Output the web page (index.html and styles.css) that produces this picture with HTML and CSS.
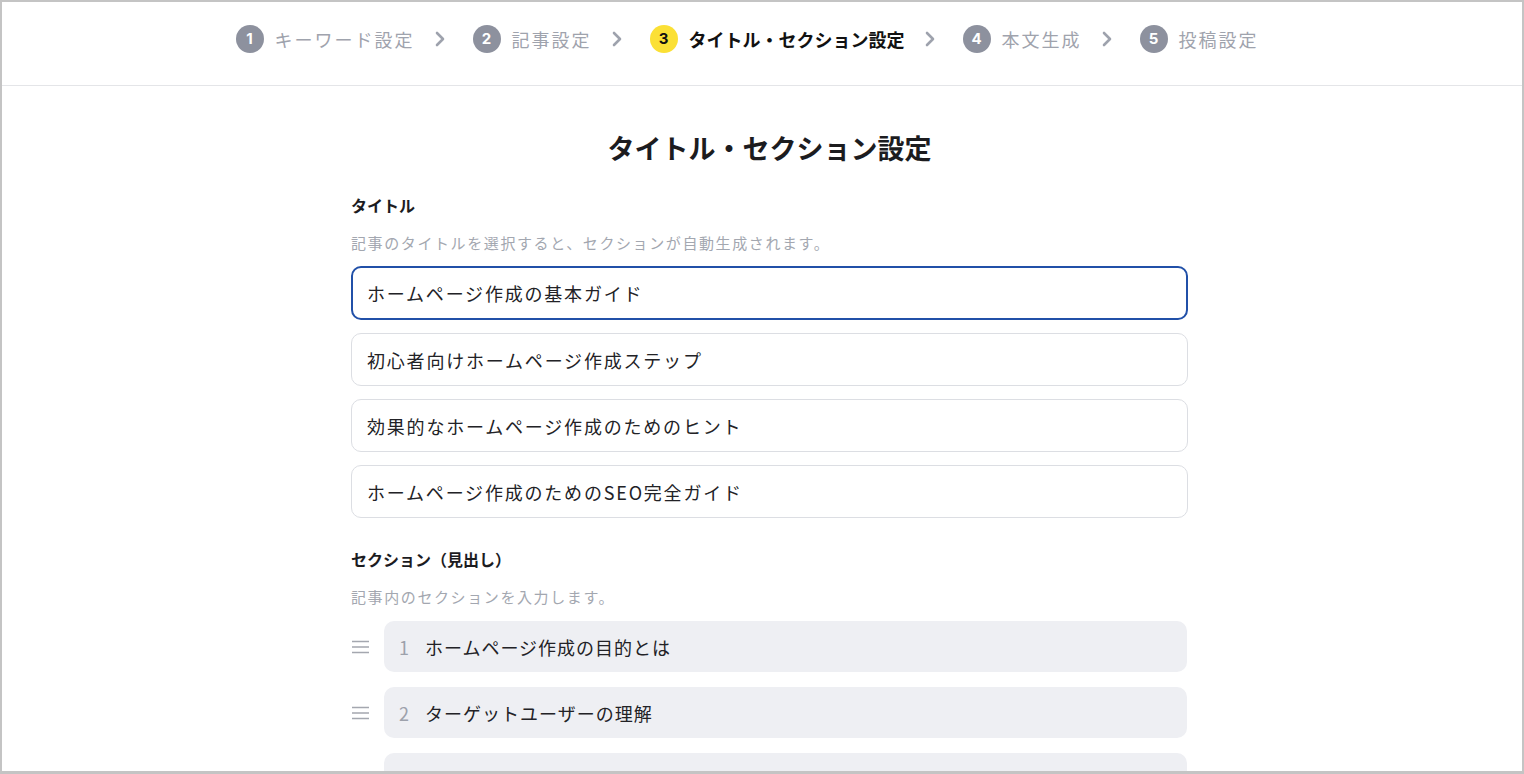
FILE: index.html
```html
<!DOCTYPE html>
<html lang="ja">
<head>
<meta charset="utf-8">
<title>タイトル・セクション設定</title>
<link rel="stylesheet" href="styles.css">
</head>
<body>
<div class="frame">
  <header class="header">
    <nav class="stepper">
      <div class="step">
        <span class="step-num">1</span><span class="step-label">キーワード設定</span>
      </div>
      <svg class="chev" viewBox="0 0 10 16" width="10" height="16"><path d="M2 2 L8 8 L2 14" /></svg>
      <div class="step">
        <span class="step-num">2</span><span class="step-label">記事設定</span>
      </div>
      <svg class="chev" viewBox="0 0 10 16" width="10" height="16"><path d="M2 2 L8 8 L2 14" /></svg>
      <div class="step step-active">
        <span class="step-num">3</span><span class="step-label">タイトル・セクション設定</span>
      </div>
      <svg class="chev" viewBox="0 0 10 16" width="10" height="16"><path d="M2 2 L8 8 L2 14" /></svg>
      <div class="step">
        <span class="step-num">4</span><span class="step-label">本文生成</span>
      </div>
      <svg class="chev" viewBox="0 0 10 16" width="10" height="16"><path d="M2 2 L8 8 L2 14" /></svg>
      <div class="step">
        <span class="step-num">5</span><span class="step-label">投稿設定</span>
      </div>
    </nav>
  </header>

  <main class="main">
    <div class="column">
      <h1 class="page-title">タイトル・セクション設定</h1>

      <section class="group">
        <h2 class="group-label">タイトル</h2>
        <p class="group-desc">記事のタイトルを選択すると、セクションが自動生成されます。</p>
        <div class="options">
          <div class="option option-selected">ホームページ作成の基本ガイド</div>
          <div class="option">初心者向けホームページ作成ステップ</div>
          <div class="option">効果的なホームページ作成のためのヒント</div>
          <div class="option">ホームページ作成のためのSEO完全ガイド</div>
        </div>
      </section>

      <section class="group group-sections">
        <h2 class="group-label">セクション（見出し）</h2>
        <p class="group-desc">記事内のセクションを入力します。</p>
        <div class="rows">
          <div class="row">
            <svg class="handle" viewBox="0 0 17 14" width="17" height="14"><path d="M0 1.5 H17 M0 7 H17 M0 12.5 H17" /></svg>
            <div class="row-box"><span class="row-num">1</span><span class="row-text">ホームページ作成の目的とは</span></div>
          </div>
          <div class="row">
            <svg class="handle" viewBox="0 0 17 14" width="17" height="14"><path d="M0 1.5 H17 M0 7 H17 M0 12.5 H17" /></svg>
            <div class="row-box"><span class="row-num">2</span><span class="row-text">ターゲットユーザーの理解</span></div>
          </div>
          <div class="row">
            <svg class="handle" viewBox="0 0 17 14" width="17" height="14"><path d="M0 1.5 H17 M0 7 H17 M0 12.5 H17" /></svg>
            <div class="row-box"><span class="row-num">3</span><span class="row-text">デザインの基本原則</span></div>
          </div>
        </div>
      </section>
    </div>
  </main>
</div>
</body>
</html>
```

FILE: styles.css
```css
* {
  box-sizing: border-box;
}

html, body {
  margin: 0;
  padding: 0;
  background: #ffffff;
}

body {
  font-family: "Noto Sans CJK JP", "Noto Sans", sans-serif;
  color: #1f1f22;
}

.frame {
  width: 1524px;
  height: 774px;
  border: 2px solid #c4c4c4;
  border-bottom-width: 3px;
  overflow: hidden;
  background: #ffffff;
}

/* Header / stepper */
.header {
  height: 84px;
  border-bottom: 1px solid #e4e5e8;
  display: flex;
  align-items: center;
  justify-content: center;
  padding-bottom: 10px;
  padding-right: 30px;
}

.stepper {
  display: flex;
  align-items: center;
}

.step {
  display: flex;
  align-items: center;
  gap: 11px;
}

.step-num {
  width: 28px;
  height: 28px;
  border-radius: 50%;
  background: #8d919e;
  color: #ffffff;
  font-family: "Inter", "Noto Sans", sans-serif;
  font-weight: 700;
  font-size: 15px;
  display: flex;
  align-items: center;
  justify-content: center;
  line-height: 1;
}

.step-label {
  font-size: 18px;
  letter-spacing: 2px;
  color: #9fa3ad;
  line-height: 1;
}

.step-active .step-num {
  background: #fbe035;
  color: #111111;
}

.step-active .step-label {
  color: #111111;
  font-weight: 700;
  letter-spacing: 0;
}

.chev {
  margin-left: 20px;
  margin-right: 28px;
  fill: none;
  stroke: #9ea2ad;
  stroke-width: 2.6;
  stroke-linecap: round;
  stroke-linejoin: round;
}

/* Main */
.main {
  padding-top: 42px;
  padding-left: 15px;
  display: flex;
  justify-content: center;
}

.column {
  width: 837px;
}

.page-title {
  margin: 0;
  text-align: center;
  font-size: 27px;
  font-weight: 700;
  line-height: 39px;
  color: #1c1c1f;
}

.group {
  margin-top: 27px;
}

.group-sections {
  margin-top: 30px;
}

.group-label {
  margin: 0;
  font-size: 16px;
  font-weight: 700;
  line-height: 22px;
  color: #1c1c1f;
}

.group-desc {
  margin: 16px 0 0;
  font-size: 15px;
  line-height: 22px;
  letter-spacing: 1.6px;
  color: #a3a7b0;
}

.options {
  margin-top: 12px;
  display: flex;
  flex-direction: column;
  gap: 13px;
}

.option {
  height: 53px;
  border: 1px solid #dcdee3;
  border-radius: 10px;
  padding: 0 15px;
  display: flex;
  align-items: center;
  font-size: 18px;
  letter-spacing: 1.8px;
  color: #222226;
}

.option-selected {
  height: 54px;
  border: 2px solid #2150a8;
  padding: 0 14px;
}

.rows {
  margin-top: 13px;
  display: flex;
  flex-direction: column;
  gap: 15px;
}

.row {
  display: flex;
  align-items: center;
}

.handle {
  margin-left: 1px;
  margin-right: 15px;
  fill: none;
  stroke: #a4a7af;
  stroke-width: 1.6;
  flex: none;
}

.row-box {
  flex: 1;
  height: 51px;
  background: #eeeff3;
  border-radius: 10px;
  margin-right: 1px;
  padding-left: 14px;
  display: flex;
  align-items: center;
  font-size: 18px;
}

.row-num {
  width: 12px;
  margin-right: 15px;
  text-align: center;
  color: #9da1ab;
}

.row-text {
  letter-spacing: 1px;
  color: #222226;
}
```
